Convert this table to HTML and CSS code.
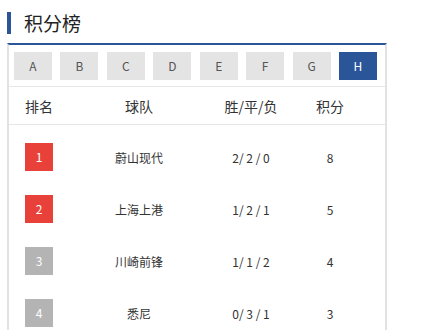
FILE: index.html
```html
<!DOCTYPE html>
<html lang="zh-CN">
<head>
  <meta charset="UTF-8" />
  <meta name="viewport" content="width=device-width, initial-scale=1.0"/>
  <title>积分榜</title>
  <link rel="stylesheet" href="styles.css">
</head>
<body>
  <div class="board">
    <h2 class="board-title">积分榜</h2>
    <div class="panel">
      <div class="groups">
        <span class="group">A</span>
        <span class="group">B</span>
        <span class="group">C</span>
        <span class="group">D</span>
        <span class="group">E</span>
        <span class="group">F</span>
        <span class="group">G</span>
        <span class="group active">H</span>
      </div>
      <div class="row head">
        <span>排名</span>
        <span>球队</span>
        <span>胜/平/负</span>
        <span>积分</span>
      </div>
      <div class="rows">
        <div class="row">
          <span><i class="rank top">1</i></span>
          <span>蔚山现代</span>
          <span>2/ 2 / 0</span>
          <span>8</span>
        </div>
        <div class="row">
          <span><i class="rank top">2</i></span>
          <span>上海上港</span>
          <span>1/ 2 / 1</span>
          <span>5</span>
        </div>
        <div class="row">
          <span><i class="rank">3</i></span>
          <span>川崎前锋</span>
          <span>1/ 1 / 2</span>
          <span>4</span>
        </div>
        <div class="row">
          <span><i class="rank">4</i></span>
          <span>悉尼</span>
          <span>0/ 3 / 1</span>
          <span>3</span>
        </div>
      </div>
    </div>
  </div>
</body>
</html>
```

FILE: styles.css
```css
body { margin: 0; font-family: "Noto Sans CJK SC", "Open Sans", sans-serif; color: #333; background: #fff; }
.board { width: 380px; padding: 12px 0 0 7px; }
.board-title {
  margin: 0 0 9px; height: 22px; line-height: 22px; padding-left: 13px;
  border-left: 4px solid #2a5699; font-size: 19px; font-weight: normal; color: #222;
}
.panel { border-top: 2px solid #2a5699; border-left: 2px solid #e2e2e2; border-right: 2px solid #e2e2e2; height: 300px; }
.groups {
  display: flex; justify-content: space-between; padding: 7px 8px 6px 5px;
  border-bottom: 1px solid #e6e6e6;
}
.group {
  width: 38px; height: 28px; line-height: 28px; text-align: center;
  background: #e4e4e4; color: #555; font-size: 12px;
}
.group.active { background: #2a5699; color: #fff; }
.row {
  display: grid; grid-template-columns: 60px 140px 84px 74px 1fr;
  height: 52px; align-items: center; text-align: center; font-size: 12px;
}
.row.head { height: 37px; font-size: 14px; border-bottom: 1px solid #e6e6e6; }
.rows { padding-top: 6px; }
.rank {
  display: inline-block; width: 28px; height: 28px; line-height: 28px;
  font-style: normal; color: #fff; background: #b4b4b4;
}
.rank.top { background: #e8413a; }
```
